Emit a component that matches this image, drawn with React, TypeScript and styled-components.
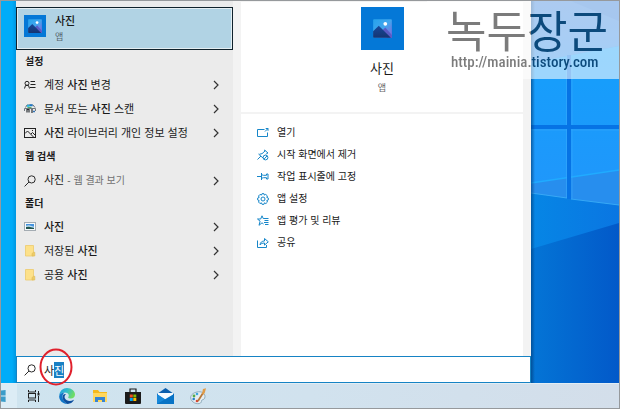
import React, { useEffect, useRef } from "react";
import styled, { createGlobalStyle } from "styled-components";

const GlobalStyle = createGlobalStyle`
  * { box-sizing: border-box; }
  body {
    margin: 0;
    font-family: "Liberation Sans", "Noto Sans CJK KR", sans-serif;
    font-size: 11px;
    color: #1a1a1a;
  }
  button { font: inherit; color: inherit; border: 0; background: none; padding: 0; cursor: pointer; }
  svg { display: block; flex: none; }
`;

const Screen = styled.div`
  position: relative;
  display: flex;
  flex-direction: column;
  min-height: 100vh;
  border: 1px solid #96999c;
  background: #00aefc;
`;

const Desktop = styled.div`
  flex: 1;
  display: grid;
  grid-template-columns: 15px minmax(0, 1fr) 88px;
`;

const LeftWallpaper = styled.div`
  background: linear-gradient(90deg, #00acf8 0 11px, #0096e0 15px);
`;

const RightWallpaper = styled.svg`
  width: 88px;
  height: 100%;
`;

const StartPanel = styled.div`
  display: flex;
  flex-direction: column;
  background: #f3f3f3;
`;

const Columns = styled.div`
  flex: 1;
  display: grid;
  grid-template-columns: 217px minmax(0, 1fr);
  column-gap: 8px;
  padding-right: 8px;
`;

const ResultColumn = styled.section`
  background: #ebebeb;
  padding-top: 6px;
`;

const BestMatch = styled.button`
  width: 100%;
  height: 43px;
  display: flex;
  align-items: flex-start;
  gap: 9px;
  padding: 7px 7px 0;
  border: 1px solid #10222c;
  background: #b1d3e4;
  outline: 1px solid #e4eef2;
  outline-offset: -2px;
  text-align: left;
`;

const BestText = styled.span`
  display: flex;
  flex-direction: column;
`;

const BestTitle = styled.strong`
  font-weight: 500;
  font-size: 11px;
  line-height: 13px;
`;

const BestKind = styled.span`
  font-size: 9px;
  line-height: 18px;
  color: #55656e;
`;

const GroupTitle = styled.h2`
  margin: 0;
  padding-left: 9px;
  font-size: 10px;
  font-weight: 700;
  line-height: 23px;
`;

const ResultRow = styled.button`
  width: 100%;
  height: 24px;
  display: grid;
  grid-template-columns: 12px 1fr 6px;
  column-gap: 8px;
  align-items: center;
  padding: 0 14px 0 8px;
  text-align: left;
  font-size: 11px;
  line-height: 24px;
  white-space: nowrap;
`;

const Match = styled.b`
  font-weight: 500;
`;

const Hint = styled.span`
  font-size: 10px;
  color: #707070;
`;

const DetailColumn = styled.section`
  display: flex;
  flex-direction: column;
  gap: 2px;
  padding-top: 1px;
`;

const Hero = styled.header`
  display: flex;
  flex-direction: column;
  align-items: center;
  height: 110px;
  padding-top: 5px;
  background: #fff;
`;

const HeroTitle = styled.h1`
  margin: 9px 0 0;
  font-size: 13px;
  font-weight: 400;
  line-height: 20px;
`;

const HeroKind = styled.span`
  font-size: 9px;
  line-height: 18px;
  color: #666;
`;

const Actions = styled.div`
  flex: 1;
  padding-top: 8px;
  background: #fff;
`;

const Action = styled.button`
  width: 100%;
  height: 22px;
  display: flex;
  align-items: center;
  gap: 8px;
  padding-left: 16px;
  font-size: 10px;
  line-height: 22px;
  white-space: nowrap;
`;

const SearchBar = styled.label`
  display: flex;
  align-items: center;
  gap: 8px;
  height: 27px;
  padding-left: 7px;
  border: 1px solid #1683c4;
  background: #fff;
`;

const SearchInput = styled.input`
  flex: 1;
  min-width: 0;
  height: 18px;
  padding: 0;
  border: 0;
  outline: 0;
  font: inherit;
  font-size: 11px;
  color: #222;
  background: transparent;
  &::selection { background: #1a80c4; color: #fff; }
`;

const Taskbar = styled.nav`
  display: flex;
  height: 25px;
  background: linear-gradient(90deg, #cfe4ef, #d1e2ee 50%, #d3deea);
  border-top: 1px solid #e2edf4;
`;

const TaskButton = styled.button<{ $start?: boolean }>`
  width: ${(p) => (p.$start ? 16 : 33)}px;
  height: 100%;
  display: flex;
  align-items: center;
  justify-content: ${(p) => (p.$start ? "flex-start" : "center")};
  background: ${(p) => (p.$start ? "#dcecf5" : "transparent")};
`;

const Watermark = styled.aside`
  position: absolute;
  top: 0;
  right: 0;
  width: 192px;
  height: 78px;
  padding: 5px 0 0 19px;
  background: rgba(255, 255, 255, 0.58);
  white-space: nowrap;
  pointer-events: none;
`;

const inkSplit = "linear-gradient(90deg, #7b7b7b 0 85px, #0c4a7c 85px)";

const WatermarkName = styled.div`
  font-family: "Noto Sans CJK KR", sans-serif;
  font-size: 44px;
  font-weight: 400;
  line-height: 46px;
  background: ${inkSplit};
  background-clip: text;
  color: transparent;
`;

const WatermarkUrl = styled.div`
  padding-left: 5px;
  font-family: "Liberation Sans Narrow", "Roboto Condensed", Roboto, sans-serif;
  font-size: 15px;
  font-weight: 500;
  line-height: 20px;
  background: ${inkSplit};
  background-clip: text;
  color: transparent;
`;

const Highlight = styled.svg`
  position: absolute;
  left: 37px;
  bottom: 22px;
`;

const PhotoIcon = ({ size, inset }: { size: number; inset: number }) => (
  <svg width={size} height={size} viewBox={`${-inset} ${-inset} ${20 + inset * 2} ${20 + inset * 2}`}>
    <defs>
      <linearGradient id={`sky${size}`} x1="0" y1="0" x2="1" y2="1">
        <stop offset="0" stopColor="#25a2ec" />
        <stop offset=".5" stopColor="#41a6ee" />
        <stop offset="1" stopColor="#8b61d8" />
      </linearGradient>
      <linearGradient id={`hill${size}`} x1="0" y1="0" x2="0" y2="1">
        <stop offset="0" stopColor="#17489a" />
        <stop offset="1" stopColor="#153572" />
      </linearGradient>
    </defs>
    <rect x={-inset} y={-inset} width="60" height="60" fill="#0478d7" />
    <rect width="20" height="20" rx="1" fill={`url(#sky${size})`} />
    <path d="M10 12l3-3 7 8v3h-5z" fill="#5a5bc5" />
    <path d="M0 13l6-6 13 13H1a1 1 0 0 1-1-1z" fill={`url(#hill${size})`} />
    <circle cx="13" cy="5" r="2" fill="#fff" />
  </svg>
);

const Chevron = () => (
  <svg width="6" height="10" viewBox="0 0 6 10" fill="none" stroke="#333" strokeWidth="1.2">
    <path d="M1 1l4 4-4 4" />
  </svg>
);

const Line = ({ children, color = "#222", size = 12 }: { children: React.ReactNode; color?: string; size?: number }) => (
  <svg width={size} height={size} viewBox="0 0 12 12" fill="none" stroke={color} strokeWidth="1">
    {children}
  </svg>
);

const AccountIcon = () => (
  <Line>
    <path d="M.5 9.5L1.500 6.500h3l1 3" />
    <circle cx="3" cy="4.300" r="2" />
    <path d="M6.500 2.500H11M6.500 5.500h5M6 8.500h5.500" />
  </Line>
);

const ScannerIcon = () => (
  <Line>
    <path d="M1.5 4.5L3 2h6l2 2.5" stroke="#667078" />
    <path d="M3 2.8h2.5" stroke="#22b4e2" strokeWidth="2" />
    <path d="M5.5 2.3h3" stroke="#1b78c8" strokeWidth="2" />
    <path d="M3.5 4.6h4" stroke="#47a957" />
    <path d="M.5 8V5.500h11V8" stroke="#6e777d" />
    <path d="M3 9.500v-3h2v3M8 6v4" stroke="#272d32" strokeWidth="1.200" />
    <path d="M9 8.500h2" stroke="#3475b6" strokeWidth="1.500" />
  </Line>
);

const LibraryIcon = () => (
  <Line>
    <rect x=".5" y="1.500" width="11" height="9" />
    <path d="M1 6.500l2.500-2.500 6 6M7 7l1.500-1.500L11 8" />
    <path d="M8 3.500h1" />
  </Line>
);

const SearchIcon = () => (
  <Line color="#2a2a2a">
    <circle cx="7.600" cy="4.400" r="3.600" />
    <path d="M5 7L.6 11.400" />
  </Line>
);

const PictureIcon = () => (
  <svg width="12" height="12" viewBox="0 0 12 12">
    <rect x=".5" y="1.500" width="11" height="8" fill="#f7fafc" stroke="#a4acb3" />
    <rect x="2" y="3" width="8" height="5" fill="#4593df" />
    <path d="M2 4.700l3-.4 5 1.400v1H2z" fill="#c1dfee" />
    <path d="M2 6l3-.3 5 1.300v1H2z" fill="#24564f" />
  </svg>
);

const FolderIcon = () => (
  <svg width="12" height="12" viewBox="0 0 12 12">
    <path d="M1.500.5h8v10.500h-8z" fill="#fde18a" stroke="#ecca6c" strokeWidth=".8" />
    <path d="M8 11V8.500l1.500-1.200h1.300V11z" fill="#eccb69" stroke="#e3be55" strokeWidth=".6" />
  </svg>
);

const blue = "#1686c9";

const actionIcons = {
  open: (
    <Line color={blue}>
      <path d="M7.500 2.500h-7v7h10V5.500M8 4.500l3-3M8.700 1.500H11v2.300" />
    </Line>
  ),
  unpin: (
    <Line color={blue}>
      <path d="M.5 10.500L4 7M1.500 5l4.500 4M2.500 5.200l2.500-.5L8 2l-.5-1L11 4l-1 .2-1 1.200" />
      <circle cx="8.500" cy="8.500" r="2.400" />
      <path d="M7 10.200l3-3.300" />
    </Line>
  ),
  pin: (
    <Line color={blue}>
      <path d="M0 5.500h4M4.500 2v7M4.500 3.700l2 .6h3V3h1.500v5H9.500V6.700h-3l-2 .6" />
    </Line>
  ),
  settings: (
    <Line color={blue}>
      <path d="M5 .7h2l.4 1.400 1.300-.7L10.500 3l-.8 1.300 1.600.7v2l-1.600.6.8 1.400-1.600 1.600-1.400-.8-.5 1.500H5l-.6-1.500-1.400.8L1.500 9l.7-1.400L.7 7V5l1.500-.6L1.500 3 3 1.400l1.400.7z" />
      <circle cx="6" cy="6" r="2" />
    </Line>
  ),
  rate: (
    <Line color={blue}>
      <path d="M11.500 3.500H6.200L5 .8 3.700 4H.5l2.600 2.200L2 10.300 5 7.800l1.500 1.200M7.500 5.500h4M7 7.500h4.500M8 9.500h3.500" />
    </Line>
  ),
  share: (
    <Line color={blue}>
      <path d="M.5 3.500v7h9V8M3 8c.3-2.800 2-4 4.500-4V1.500L11.300 4.800 7.500 8.100V6C5.300 6 4 6.600 3 8z" />
    </Line>
  ),
};

const actions: { icon: keyof typeof actionIcons; label: string }[] = [
  { icon: "open", label: "열기" },
  { icon: "unpin", label: "시작 화면에서 제거" },
  { icon: "pin", label: "작업 표시줄에 고정" },
  { icon: "settings", label: "앱 설정" },
  { icon: "rate", label: "앱 평가 및 리뷰" },
  { icon: "share", label: "공유" },
];

const Result = ({ icon, children }: { icon: React.ReactNode; children: React.ReactNode }) => (
  <ResultRow type="button">
    {icon}
    <span>{children}</span>
    <Chevron />
  </ResultRow>
);

const Wallpaper = () => (
  <RightWallpaper viewBox="0 0 88 382" preserveAspectRatio="none" aria-hidden="true">
    <defs>
      <linearGradient id="sky" x1="0" y1="0" x2="0" y2="1">
        <stop offset="0" stopColor="#3a83dc" />
        <stop offset="1" stopColor="#2b8deb" />
      </linearGradient>
      <linearGradient id="deep" x1="0" y1="0" x2="1" y2="0">
        <stop offset="0" stopColor="#0475d6" />
        <stop offset="1" stopColor="#0259c9" />
      </linearGradient>
      <linearGradient id="beam" x1="0" y1="0" x2="1" y2="0">
        <stop offset="0" stopColor="#0686e5" />
        <stop offset="1" stopColor="#0a76e2" />
      </linearGradient>
      <linearGradient id="pane" x1="0" y1="0" x2="0" y2="1">
        <stop offset="0" stopColor="#149ffb" />
        <stop offset="1" stopColor="#2196fb" />
      </linearGradient>
      <linearGradient id="edge" x1="0" y1="0" x2="1" y2="0">
        <stop offset="0" stopColor="#003d78" stopOpacity=".65" />
        <stop offset="1" stopColor="#003d78" stopOpacity="0" />
      </linearGradient>
    </defs>
    <rect width="88" height="382" fill="url(#deep)" />
    <path d="M0 0h88v222L0 248z" fill="url(#beam)" />
    <path d="M0 0h88v45L0 62z" fill="url(#sky)" />
    <path d="M0 0h40l48 20V0z" fill="#2470cf" opacity=".5" />
    <path d="M0 62L88 45v159L0 192z" fill="url(#pane)" />
    <path d="M0 182l88-13v35L0 192z" fill="#278eee" />
    <path d="M0 182l88-13" stroke="#20abff" strokeWidth="1.500" />
    <path d="M0 192l36 5M40 198l48 6" stroke="#38a8f5" />
    <path d="M35.500 60v137M41 60v138M0 129h88" stroke="#38aafc" strokeWidth=".6" />
    <path d="M38 54v144M0 126h88" stroke="#0673e5" strokeWidth="4" />
    <rect width="4" height="382" fill="url(#edge)" />
  </RightWallpaper>
);

const TaskViewIcon = () => (
  <svg width="12" height="12" viewBox="0 0 12 12" fill="none" stroke="#222" strokeWidth="1">
    <path d="M.5 0v2h7V0M.5 12v-2h7v2" />
    <rect x=".5" y="3.500" width="7" height="4.500" />
    <path d="M10.500 1v2M10.500 6v6" />
    <path d="M10.500 3v2.500" strokeWidth="2" />
  </svg>
);

const EdgeIcon = () => (
  <svg width="16" height="16" viewBox="0 0 16 16">
    <defs>
      <linearGradient id="edgeTop" x1="0" y1="0" x2="1" y2=".4">
        <stop offset="0" stopColor="#1b9de2" />
        <stop offset=".5" stopColor="#31bccb" />
        <stop offset="1" stopColor="#6fdd65" />
      </linearGradient>
    </defs>
    <path d="M.3 7.500C.5 3 4 0 8 0c4.600 0 8 3 8 6.600 0 2.600-2 4-4 4-1.600 0-2.800-.6-2.800-1.200 0-.5.600-.8.600-1.900C9.800 5.800 8 4.500 5.800 4.500 3 4.500.9 6 .3 7.500z" fill="url(#edgeTop)" />
    <path d="M.2 8C.5 5.800 3 4.500 5.800 4.500c-1.600 1-2.300 2.500-2.300 4.200 0 3 2 5.500 5 7.200C3.800 16.200-.2 12.500.2 8z" fill="#0f76c8" />
    <path d="M6.800 6.200C5.500 7.300 5.200 9 6 10.500c1.300 2.500 5 3.200 8.500 1.400.3-.1.500.1.300.4C13.500 14.600 11 16 8.500 15.900 5.300 14.500 3.500 11.600 3.600 9 3.700 7 5 5.800 6.800 6.200z" fill="#0c4e9e" />
  </svg>
);

const ExplorerIcon = () => (
  <svg width="16" height="14" viewBox="0 0 16 14">
    <path d="M1 1h5l1.500 2H15v10H1z" fill="#f4b91e" />
    <path d="M1 4h14v9H1z" fill="#ffd75e" />
    <path d="M3 8h10v5h-3v-2H6v2H3z" fill="#3584d3" />
  </svg>
);

const StoreIcon = () => (
  <svg width="16" height="16" viewBox="0 0 16 16">
    <path d="M5 4V1h6v3" fill="none" stroke="#1b1b1b" strokeWidth="1.200" />
    <path d="M0 4h16v11a1 1 0 0 1-1 1H1a1 1 0 0 1-1-1z" fill="#1b1b1b" />
    <path d="M4.800 6.500h3v3h-3z" fill="#f15020" />
    <path d="M8.300 6.500h3v3h-3z" fill="#7fba00" />
    <path d="M4.800 10h3v3h-3z" fill="#00a4ef" />
    <path d="M8.300 10h3v3h-3z" fill="#ffb900" />
  </svg>
);

const MailIcon = () => (
  <svg width="17" height="16" viewBox="0 0 17 16">
    <path d="M0 6l8.500-6L17 6v10H0z" fill="#0b5fae" />
    <path d="M1 5h15v2l-7.500 5L1 7z" fill="#f6fbff" />
    <path d="M0 6l8.500 5.500V16H0z" fill="#1788d9" />
    <path d="M0 16L17 6v10z" fill="#0873c5" />
  </svg>
);

const PaintIcon = () => (
  <svg width="17" height="17" viewBox="0 0 17 17">
    <path d="M7 4c4-1 8 1 8 4.500 0 3-2 3-3 3.500s0 2-1.500 3C7.500 17 1 14.500.7 9.800.6 6.500 4 4.600 7 4z" fill="#e5edf1" stroke="#7b9caf" strokeWidth=".8" />
    <circle cx="4" cy="8" r="1.400" fill="#56a946" />
    <circle cx="3.700" cy="11" r="1.300" fill="#287fc9" />
    <circle cx="7" cy="6" r="1.300" fill="#39a7dc" />
    <circle cx="7" cy="13" r="1.300" fill="#d64635" />
    <path d="M8 13l5-8" stroke="#b77737" strokeWidth="1.700" />
    <path d="M12 5.500L13 1l3-.8-1.200 4.600-1.500 2z" fill="#df9b48" />
  </svg>
);

const StartIcon = () => (
  <svg width="5" height="12" viewBox="0 0 5 12">
    <path d="M0 .6L4.600 0v5.500H0zM0 6.500h4.600V12L0 11.400z" fill="#3a9cc9" />
  </svg>
);

const tasks = [
  { label: "작업 보기", icon: <TaskViewIcon /> },
  { label: "Microsoft Edge", icon: <EdgeIcon /> },
  { label: "파일 탐색기", icon: <ExplorerIcon /> },
  { label: "Microsoft Store", icon: <StoreIcon /> },
  { label: "메일", icon: <MailIcon /> },
  { label: "그림판", icon: <PaintIcon /> },
];

export default function App() {
  const inputRef = useRef<HTMLInputElement>(null);

  useEffect(() => {
    inputRef.current?.focus();
    inputRef.current?.setSelectionRange(1, 2);
  }, []);

  return (
    <Screen>
      <GlobalStyle />
      <Desktop>
        <LeftWallpaper />
        <StartPanel>
          <Columns>
            <ResultColumn>
              <BestMatch type="button">
                <PhotoIcon size={22} inset={6} />
                <BestText>
                  <BestTitle>사진</BestTitle>
                  <BestKind>앱</BestKind>
                </BestText>
              </BestMatch>
              <GroupTitle>설정</GroupTitle>
              <Result icon={<AccountIcon />}>계정 <Match>사진</Match> 변경</Result>
              <Result icon={<ScannerIcon />}>문서 또는 <Match>사진</Match> 스캔</Result>
              <Result icon={<LibraryIcon />}><Match>사진</Match> 라이브러리 개인 정보 설정</Result>
              <GroupTitle>웹 검색</GroupTitle>
              <Result icon={<SearchIcon />}>사진 <Hint>- 웹 결과 보기</Hint></Result>
              <GroupTitle>폴더</GroupTitle>
              <Result icon={<PictureIcon />}><Match>사진</Match></Result>
              <Result icon={<FolderIcon />}>저장된 <Match>사진</Match></Result>
              <Result icon={<FolderIcon />}>공용 <Match>사진</Match></Result>
            </ResultColumn>
            <DetailColumn>
              <Hero>
                <PhotoIcon size={43} inset={13} />
                <HeroTitle>사진</HeroTitle>
                <HeroKind>앱</HeroKind>
              </Hero>
              <Actions>
                {actions.map((a) => (
                  <Action type="button" key={a.icon}>
                    {actionIcons[a.icon]}
                    {a.label}
                  </Action>
                ))}
              </Actions>
            </DetailColumn>
          </Columns>
          <SearchBar>
            <SearchIcon />
            <SearchInput ref={inputRef} type="text" defaultValue="사진" aria-label="검색" />
          </SearchBar>
        </StartPanel>
        <Wallpaper />
      </Desktop>
      <Taskbar>
        <TaskButton type="button" $start aria-label="시작"><StartIcon /></TaskButton>
        {tasks.map((t) => (
          <TaskButton type="button" key={t.label} aria-label={t.label}>{t.icon}</TaskButton>
        ))}
      </Taskbar>
      <Watermark>
        <WatermarkName>녹두장군</WatermarkName>
        <WatermarkUrl>http://mainia.tistory.com</WatermarkUrl>
      </Watermark>
      <Highlight width="36" height="38" viewBox="0 0 36 38" fill="none" stroke="#e0202c" strokeWidth="2" aria-hidden="true">
        <ellipse cx="18" cy="19" rx="15.500" ry="17.500" />
      </Highlight>
    </Screen>
  );
}
